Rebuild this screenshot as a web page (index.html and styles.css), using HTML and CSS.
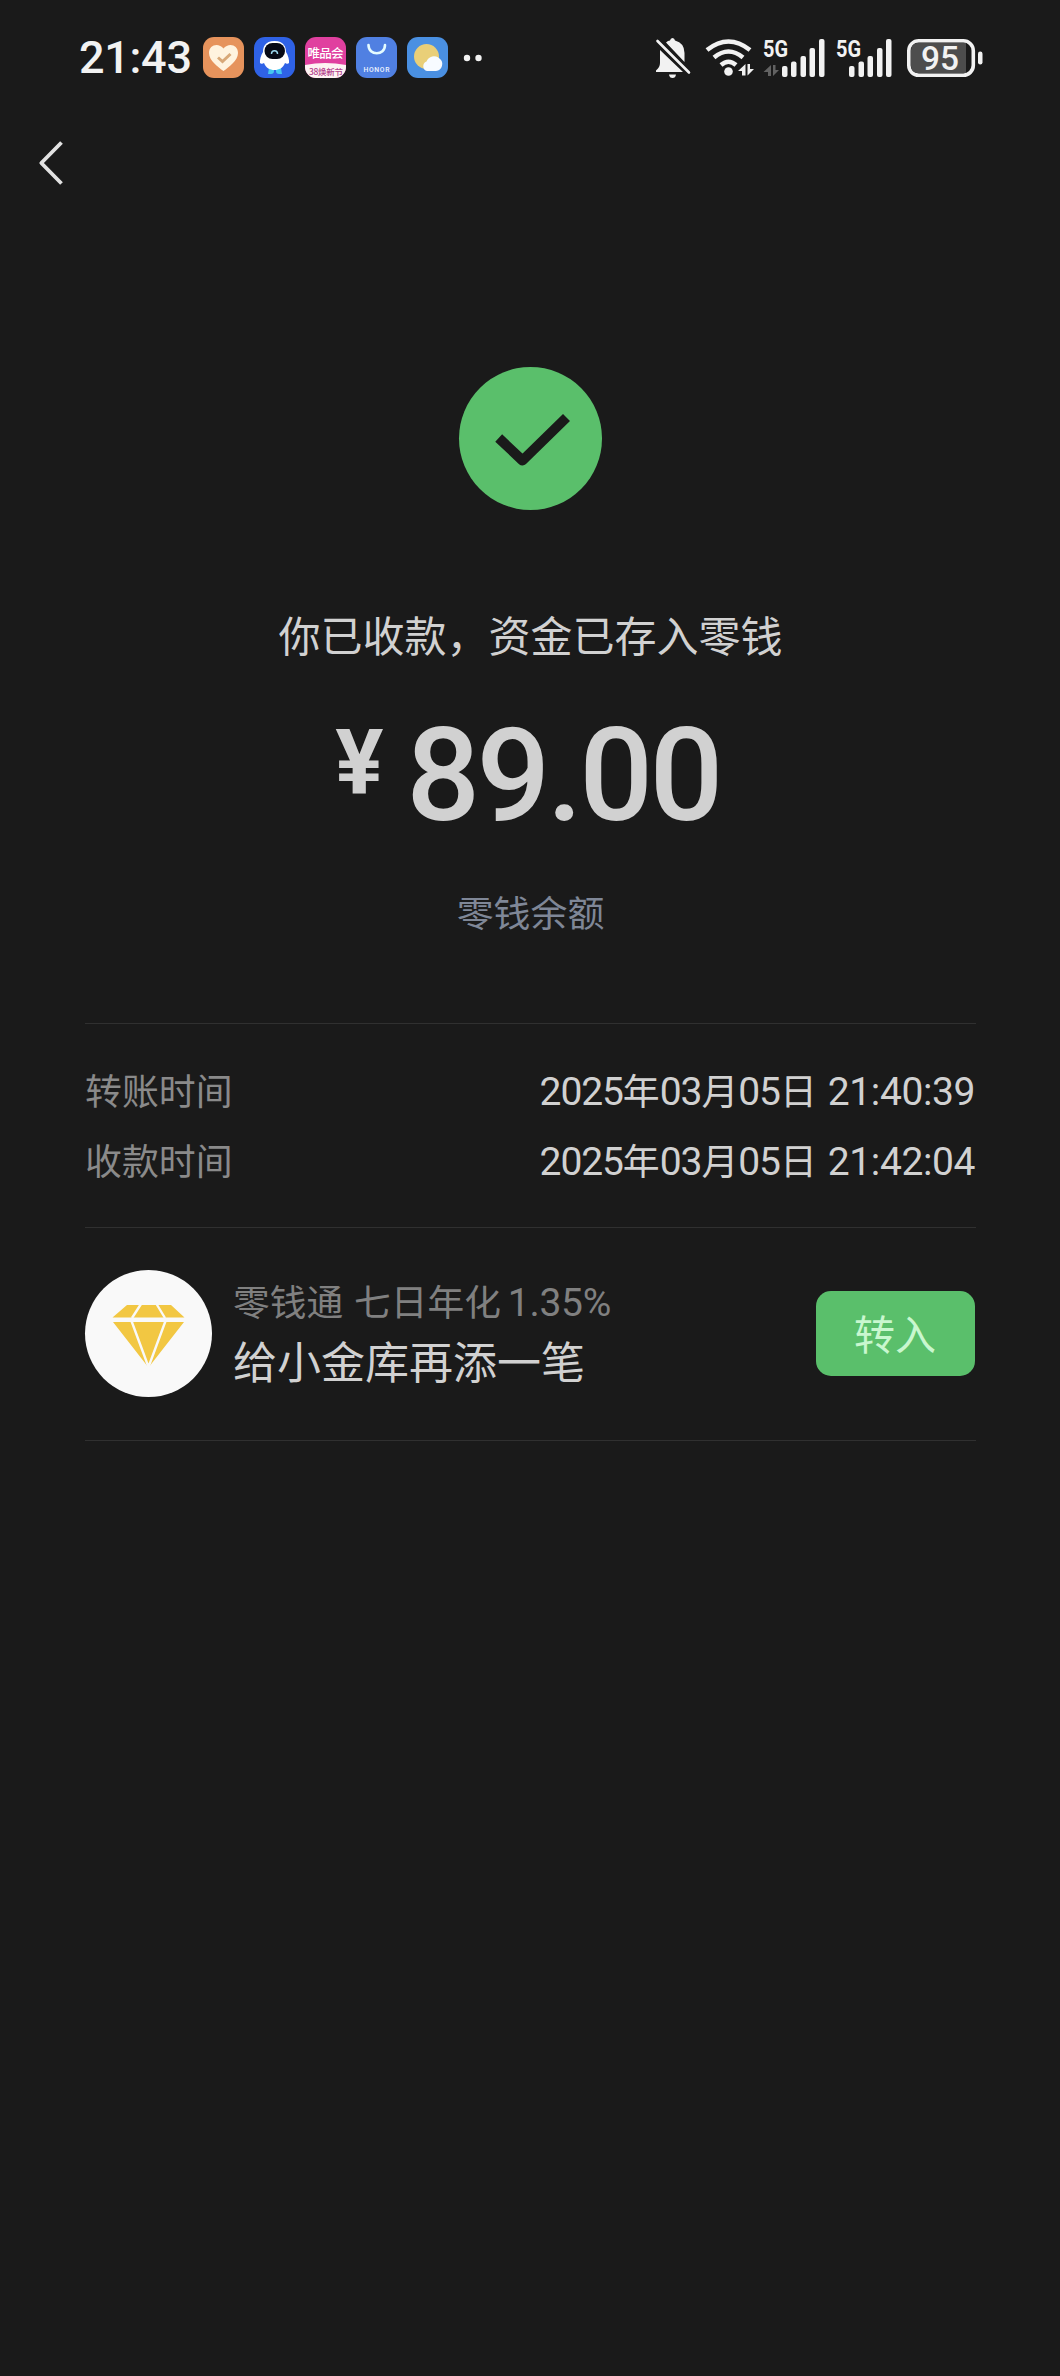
FILE: index.html
```html
<!DOCTYPE html>
<html lang="zh-CN">
<head>
<meta charset="utf-8">
<title>零钱收款</title>
<link rel="stylesheet" href="styles.css">
</head>
<body>
<header class="status">
  <div class="status-left">
    <span class="clock">21:43</span>
    <svg class="app" viewBox="0 0 41 41"><rect width="41" height="41" rx="11" fill="#e6935c"/><path d="M20.500 34C15 30 6 23.500 6 16C6 7 16 5.500 20.500 11.500C25 5.500 35 7 35 16C35 23.500 26 30 20.500 34Z" fill="#fff3df"/><path d="M15 20.500L19.500 24.500L27.500 17" fill="none" stroke="#d8a878" stroke-width="3"/></svg>
    <svg class="app" viewBox="0 0 41 41"><rect width="41" height="41" rx="11" fill="#2f62e6"/><path d="M15 31h5v3q0 3-3 3h-3zM22 31h5l1 6h-3q-3 0-3-3z" fill="#45c8f0"/><path d="M20.500 4C11 4 9 10 9 15C7 18 5.500 23 6 26C7 27.500 9 26.500 10 26C12 31 16 33 20.500 33S29 31 31 26C32 26.500 34 27.500 35 26C35.500 23 34 18 32 15C32 10 30 4 20.500 4Z" fill="#fff"/><rect x="10.500" y="6" width="20.500" height="16" rx="8" fill="#070a16"/><path d="M17.500 17c0-4.500 6-4.500 6 0" fill="none" stroke="#9cd8ee" stroke-width="1.500"/></svg>
    <svg class="app" viewBox="0 0 41 41"><defs><clipPath id="tile"><rect width="41" height="41" rx="11"/></clipPath></defs><g clip-path="url(#tile)"><rect width="41" height="41" fill="#e0409f"/><path d="M0 28Q20 24 41 28V41H0Z" fill="#fdf4f3"/></g><text class="cjk" x="20.500" y="21" font-size="12.500" text-anchor="middle" textLength="36" fill="#fff">唯品会</text><text class="cjk" x="21" y="38" font-size="8.500" text-anchor="middle" textLength="34" fill="#b3428c">38焕新节</text></svg>
    <svg class="app" viewBox="0 0 41 41"><rect width="41" height="41" rx="11" fill="#5080e2"/><path d="M12.500 8c0 11 16.500 11 16.500 0" fill="none" stroke="#e4fbff" stroke-width="2.600" stroke-linecap="round"/><text class="latin" x="20.500" y="34.500" font-size="6.800" text-anchor="middle" textLength="26" fill="#eef5ff">HONOR</text></svg>
    <svg class="app" viewBox="0 0 41 41"><rect width="41" height="41" rx="11" fill="#4a90e2"/><circle cx="19.500" cy="19.500" r="12.500" fill="#e9cf78"/><path d="M20 34a5 5 0 0 1-.5-9.500a8 8 0 0 1 13-3A7 7 0 0 1 29 34Z" fill="#f7fbff"/></svg>
    <svg class="dots" viewBox="0 0 20 8"><circle cx="4" cy="4" r="3.200"/><circle cx="15.500" cy="4" r="3.200"/></svg>
  </div>
  <div class="status-right">
    <svg class="bell" viewBox="0 0 36 40"><path d="M5 12L5 25Q5 29 1 32.500V34H28ZM11 4.500Q13 2.500 15 2.500Q15.500 0 17.500 0T20 2.500Q29.500 5 29.500 15V24Z"/><path d="M14 36.500h7q-.5 3.500-3.500 3.500T14 36.500Z"/><path d="M2.500 3L34 34.500" fill="none" stroke="#f2f2f2" stroke-width="2.600" stroke-linecap="round"/></svg>
    <svg class="wifi" viewBox="0 0 50 38"><g fill="none" stroke="#f2f2f2" stroke-width="4.500"><path d="M2 11Q23.500-6 45 11"/><path d="M9 18.500Q23.500 6.500 38 18.500"/><path d="M16 26Q23.500 19.500 31 26"/></g><circle cx="23.500" cy="32.500" r="4.300"/><path d="M40.500 25V36.500H37V32H33ZM42.500 36.500V25H45V30H49Z"/></svg>
    <svg class="cell" viewBox="0 0 64 38"><text class="net" x="0" y="17.500" font-size="23" textLength="25" lengthAdjust="spacingAndGlyphs">5G</text><path d="M8 26V37H5V33H.5ZM10 37V26H12.500V31H16Z" fill="#626262"/><rect x="19" y="27" width="5.500" height="11" rx="2"/><rect x="28" y="22.500" width="5.500" height="15.500" rx="2"/><rect x="37.500" y="17" width="5.500" height="21" rx="2"/><rect x="46.500" y="9" width="5.500" height="29" rx="2"/><rect x="56" y="0" width="5.500" height="38" rx="2"/></svg>
    <svg class="cell second" viewBox="0 0 64 38"><text class="net" x="0" y="17.500" font-size="23" textLength="25" lengthAdjust="spacingAndGlyphs">5G</text><rect x="13" y="27" width="5.500" height="11" rx="2"/><rect x="22.500" y="22.500" width="5.500" height="15.500" rx="2"/><rect x="31.500" y="17" width="5.500" height="21" rx="2"/><rect x="41" y="9" width="5.500" height="29" rx="2"/><rect x="50" y="0" width="5.500" height="38" rx="2"/></svg>
    <svg class="battery" viewBox="0 0 76 38"><rect x="1.800" y="1.800" width="64.500" height="34.500" rx="10" fill="#1a1a1a" stroke="#f2f2f2" stroke-width="3.600"/><path d="M10 4H59V34H10Q4 33 4 27V11Q4 5 10 4Z" fill="#4d4d4d"/><text class="level" x="33" y="30.500" font-size="33" text-anchor="middle" textLength="38" lengthAdjust="spacingAndGlyphs">95</text><rect x="71" y="12.500" width="4.500" height="13" rx="2.200"/></svg>
  </div>
</header>
<nav class="nav">
  <svg class="back" viewBox="0 0 24 46"><path d="M22.500 2.500L2.300 23L22.500 43.500" fill="none" stroke="#e2e2e2" stroke-width="3.800" stroke-linejoin="round"/></svg>
</nav>
<main class="page">
  <section class="result">
    <svg class="success" viewBox="0 0 143 143"><circle cx="71.500" cy="71.500" r="71.500" fill="#5abf6b"/><path d="M39.700 71L63.500 93.500L107.500 50.500" fill="none" stroke="#1a1a1a" stroke-width="10" stroke-linejoin="round"/></svg>
    <h1 class="message">你已收款，资金已存入零钱</h1>
    <p class="amount"><span class="currency">¥</span><span class="value">89.00</span></p>
    <a class="balance">零钱余额</a>
  </section>
  <dl class="times">
    <div class="row"><dt>转账时间</dt><dd><span class="n">2025</span>年<span class="n">03</span>月<span class="n">05</span>日<span class="n time">21:40:39</span></dd></div>
    <div class="row"><dt>收款时间</dt><dd><span class="n">2025</span>年<span class="n">03</span>月<span class="n">05</span>日<span class="n time">21:42:04</span></dd></div>
  </dl>
  <section class="promo">
    <svg class="gem" viewBox="0 0 127 127"><circle cx="63.500" cy="63.500" r="63.500" fill="#f9f9f9"/><path d="M42 35H86L99.500 47.500H27.500ZM28 52H99L63.500 97.500Z" fill="#f2c742"/><path d="M56 34L47 48M71.500 34L80 48M46.500 51L63.500 97L80.500 51" fill="none" stroke="#f9f9f9" stroke-width="2.400"/></svg>
    <div class="promo-text">
      <p class="rate">零钱通<span class="gap">七日年化</span><span class="n yield">1.35%</span></p>
      <p class="slogan">给小金库再添一笔</p>
    </div>
    <button class="transfer">转入</button>
  </section>
</main>
</body>
</html>
```
FILE: styles.css
```css
* { box-sizing: border-box; }
body { margin: 0; min-height: 2376px; background: #1a1a1a; color: #d1d1d1; font-family: "Noto Sans CJK SC", sans-serif; }
h1, p, dl, dd { margin: 0; font-weight: 400; }
svg { display: block; flex: none; overflow: visible; fill: #f2f2f2; }

.status { height: 116px; padding: 0 77px 0 79px; display: flex; justify-content: space-between; }
.status-left, .status-right { display: flex; align-items: center; height: 115px; }
.clock { width: 124px; font: 500 45px/50px Roboto, sans-serif; letter-spacing: -0.3px; padding-top: 1px; color: #f2f2f2; }
.app { width: 41px; height: 41px; margin-right: 10px; }
.dots { width: 20px; height: 8px; margin-left: 5px; }
.cjk { font-family: "Noto Sans CJK SC", sans-serif; font-weight: 500; }
.latin { font-family: Roboto, sans-serif; font-weight: 500; }
.net { font-family: Roboto, sans-serif; font-weight: 700; }
.level { font-family: Roboto, sans-serif; font-weight: 500; }
.bell { width: 36px; height: 40px; margin: 1px 14px 0 0; }
.wifi { width: 50px; height: 38px; margin-right: 8px; }
.cell { width: 64px; height: 38px; margin-right: 9px; }
.second { margin-right: 7px; }
.battery { width: 76px; height: 38px; }

.nav { height: 93px; padding: 24px 0 0 39px; }
.back { width: 24px; height: 46px; }

.page { padding: 0 84px 0 85px; }
.result { height: 814px; padding-top: 158px; display: flex; flex-direction: column; align-items: center; }
.success { width: 143px; height: 143px; }
.message { margin-top: 94px; font-size: 42px; line-height: 60px; }
.amount { height: 130px; margin-top: 47px; padding-right: 6px; display: flex; font-family: Roboto, sans-serif; font-weight: 500; }
.currency { width: 71px; font-size: 90px; font-weight: 700; line-height: 106px; }
.value { font-size: 130px; line-height: 130px; letter-spacing: -3.6px; }
.balance { margin-top: 43px; color: #7f8797; font-size: 36.9px; line-height: 54px; }

.times { height: 205px; padding-top: 30px; border-top: 1px solid #303030; border-bottom: 1px solid #303030; }
.row { height: 70px; display: flex; justify-content: space-between; font-size: 36.9px; line-height: 70px; }
dt { color: #8a8a8a; }
.n { font-family: Roboto, sans-serif; font-size: 39px; letter-spacing: -1.1px; line-height: 1; }
.time { margin-left: 11px; margin-right: 1px; letter-spacing: -0.4px; }

.promo { height: 213px; padding-bottom: 2px; display: flex; align-items: center; border-bottom: 1px solid #303030; }
.gem { width: 127px; height: 127px; }
.promo-text { flex: 1; margin-left: 21px; padding-bottom: 5px; }
.rate { color: #808080; font-size: 36.7px; line-height: 58px; }
.gap { margin-left: 11px; }
.yield { margin-left: 7px; letter-spacing: -0.3px; }
.slogan { font-size: 44px; line-height: 62px; }
.transfer { width: 159px; height: 85px; margin-right: 1px; padding: 0 1px 2px 0; border: 0; border-radius: 15px; background: #5abf6b; color: #c9f7cf; font: 400 41px/83px "Noto Sans CJK SC", sans-serif; }
```
